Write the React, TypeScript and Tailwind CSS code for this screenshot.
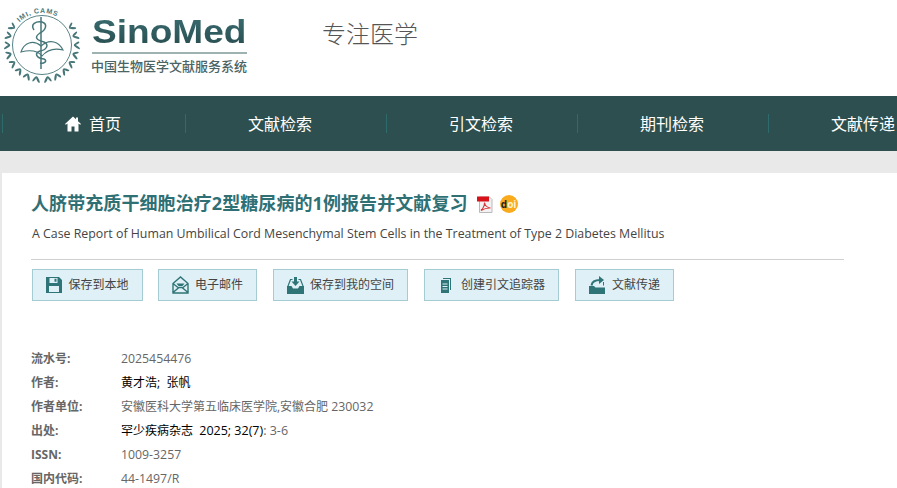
import React from "react";

const cjk = { fontFamily: '"Open Sans","Noto Sans CJK SC",sans-serif' };

function Logo() {
  const c = "#477679";
  const leaves: React.ReactNode[] = [];
  for (let s = -1; s <= 1; s += 2) {
    for (let a = 58; a <= 170; a += 16) {
      const ang = s * a;
      leaves.push(
        <g key={ang} transform={`rotate(${ang} 42 45)`}>
          <ellipse cx="42" cy="9.500" rx="1.100" ry="3.600" fill={c} transform={`rotate(${s * 34} 42 13)`} />
          <ellipse cx="42" cy="10" rx="1" ry="3.200" fill={c} transform={`rotate(${s * -30} 42 13)`} />
        </g>
      );
    }
  }
  return (
    <svg width="80" height="90" viewBox="0 0 80 90" className="shrink-0">
      <defs>
        <path id="arc" d="M17.500 24.400 A32 32 0 0 1 66.500 24.400" />
      </defs>
      {leaves}
      <circle cx="42" cy="45" r="29.500" fill="none" stroke={c} strokeWidth="0.900" />
      <path d="M21 52C24 43 33 39 41 46 50 38 59 42 63 50 55 48 47 50 42 56 37 50 29 50 21 52z" fill="#fff" stroke={c} strokeWidth="1.100" />
      <path d="M41 17v52" stroke={c} strokeWidth="1.500" />
      <path d="M34 30C30 24 36 21 42 22 48 24 46 30 40 33 34 37 36 40 44 42 50 45 46 50 40 51 34 53 36 58 44 59 48 61 44 64 40 63" fill="none" stroke={c} strokeWidth="1.500" />
      <text fontSize="7" fontWeight="700" fill={c} fontFamily="Liberation Sans, sans-serif" letterSpacing="0.700">
        <textPath href="#arc" startOffset="3">IMI, CAMS</textPath>
      </text>
    </svg>
  );
}

const Floppy = () => (
  <svg width="16" height="16" viewBox="0 0 16 16"><path fill="#2f7476" fillRule="evenodd" d="M0 0h13l3 3v13H0zM3.500 1v5h8V1zM8.500 1.800h2v3h-2zM3 9v6h10V9z" /></svg>
);
const Mail = () => (
  <svg width="17" height="18" viewBox="0 0 17 18"><path fill="none" stroke="#2f7476" strokeWidth="1.400" d="M1 7.500 8.500 1 16 7.500V17H1zM1 16.500l6-5h3l6 5M1 7.500l5 4M16 7.500l-5 4" /><path fill="#2f7476" d="M4.500 7.500h8l-2 2.500h-4z" /></svg>
);
const Inbox = () => (
  <svg width="17" height="17" viewBox="0 0 17 17"><path fill="#2f7476" d="M0 9h4.500l1.500 2.500h5L12.500 9H17v8H0z" /><path fill="none" stroke="#2f7476" strokeWidth="1.200" d="M1 9 3.500 2.500h2M16 9l-2.500-6.500h-2" /><path fill="#2f7476" d="M7 0h3v4.500h2.500l-4 4.500-4-4.500H7z" /></svg>
);
const Docs = () => (
  <svg width="10" height="15" viewBox="0 0 10 15"><path fill="#2f7476" d="M2 0h8v12H9V1H2z" /><path fill="#2f7476" fillRule="evenodd" d="M0 2h8v13H0zM1.500 5.500v1h5v-1zM1.500 8v1h5V8zM1.500 10.500v1h5v-1z" /></svg>
);
const FolderShare = () => (
  <svg width="17" height="18" viewBox="0 0 17 18"><path fill="#2f7476" d="M0 10h5l1.500 1.500H16V18H0z" /><path fill="none" stroke="#2f7476" strokeWidth="2" d="M2.500 9.500C3 6 6 4 11 4" /><path fill="#2f7476" d="M10 0l5 4-5 4z" /><path fill="none" stroke="#2f7476" strokeWidth="1" d="M14.500 6v3.500" /></svg>
);

function Btn({ w, icon, iconW, text, extra = "" }: { w: string; icon: React.ReactNode; iconW: string; text: string; extra?: string }) {
  return (
    <div className={`${w} ${extra} h-8 flex items-center justify-center bg-[#dff1f7] border border-[#a6ccd3] text-xs text-[#444]`}>
      <span className={`${iconW} flex justify-center mr-[6px]`}>{icon}</span>
      <span>{text}</span>
    </div>
  );
}

function Row({ k, children }: { k: string; children: React.ReactNode }) {
  return (
    <div className="flex h-6 items-center text-xs text-[#666]">
      <span className="w-[90px] font-bold">{k}</span>
      <span className="whitespace-nowrap">{children}</span>
    </div>
  );
}

function NavItem({ w, text, icon }: { w: string; text: string; icon?: React.ReactNode }) {
  return (
    <div className={`${w} shrink-0 h-full flex items-center`}>
      <span className="w-px h-[19px] bg-[#2f6a6c]" />
      <span className="flex items-center text-base text-white ml-[62px]">
        {icon}
        {text}
      </span>
    </div>
  );
}

export default function App() {
  return (
    <div className="w-[897px] h-[488px] overflow-hidden bg-[#e9e9e9]" style={cjk}>
      <header className="h-24 bg-white flex items-start">
        <Logo />
        <div className="ml-[12px] pt-[10px] w-[155px] flex flex-col">
          <div
            className="text-[34px] leading-[42px] font-bold origin-left scale-x-[1.09] bg-gradient-to-b from-[#3d7276] to-[#26494c] bg-clip-text text-transparent"
            style={{ fontFamily: '"Liberation Sans",sans-serif' }}
          >
            SinoMed
          </div>
          <div className="h-[2px] bg-[#9fb2b2]" />
          <div className="text-[13px] leading-[18px] font-medium text-[#4c6464] mt-[3px] -ml-px whitespace-nowrap">中国生物医学文献服务系统</div>
        </div>
        <div className="ml-[75px] mt-[16px] text-2xl leading-9 text-[#555] font-light">专注医学</div>
      </header>
      <nav className="h-[55px] bg-[#2d4f4f] flex pl-[2px] whitespace-nowrap">
        <NavItem
          w="w-[183px]"
          text="首页"
          icon={
            <svg width="16" height="16" viewBox="0 0 16 15" className="mr-[8px]">
              <path fill="#fff" d="M8 0 0 7.500l.8.800L2.500 7v8h4v-5h3v5h4V7l1.700 1.300.8-.8L13 4.700V1h-2v1.800z" />
            </svg>
          }
        />
        <NavItem w="w-[201px]" text="文献检索" />
        <NavItem w="w-[191px]" text="引文检索" />
        <NavItem w="w-[191px]" text="期刊检索" />
        <NavItem w="w-[191px]" text="文献传递" />
      </nav>
      <main className="mt-[22px] ml-[2px] h-[400px] bg-white pl-[29px] pt-[18px]">
        <div className="flex items-center h-6">
          <h1 className="text-lg leading-6 font-bold tracking-[0.08px] text-[#2f7074] whitespace-nowrap">人脐带充质干细胞治疗2型糖尿病的1例报告并文献复习</h1>
          <svg width="18" height="19" viewBox="0 0 18 18" className="ml-[8px] mt-[2px]">
            <path fill="#f2f2f2" stroke="#b9b9b9" d="M3.500 1.500h10l2.500 2.500v13H3.500z" />
            <path fill="#d8121b" d="M1 1h12v5H1z" />
            <path fill="none" stroke="#d8383c" strokeWidth="1.100" d="M5 15c2-2 3.500-5 3.500-8 .5 3 2.500 5 6 5.500-3-.3-6 .5-9.500 2.500z" />
          </svg>
          <span className="ml-[6px] mt-[2px] w-[18px] h-[18px] rounded-full bg-[#f9ab1d] flex items-center justify-center text-[10px] font-bold leading-none">
            <span className="text-[#222]">d</span>
            <span className="text-[#fff3d0]">oi</span>
          </span>
        </div>
        <div className="mt-[9px] ml-px text-[12.360px] leading-5 text-[#444] whitespace-nowrap">A Case Report of Human Umbilical Cord Mesenchymal Stem Cells in the Treatment of Type 2 Diabetes Mellitus</div>
        <div className="mt-[15px] w-[813px] h-px bg-[#cfcfcf]" />
        <div className="mt-[9px] flex ml-px gap-4 whitespace-nowrap">
          <Btn w="w-[111px]" icon={<Floppy />} iconW="w-4" text="保存到本地" />
          <Btn w="w-[99px]" extra="-ml-px" icon={<Mail />} iconW="w-[17px]" text="电子邮件" />
          <Btn w="w-[135px]" icon={<Inbox />} iconW="w-[17px]" text="保存到我的空间" />
          <Btn w="w-[135px]" icon={<Docs />} iconW="w-[17px]" text="创建引文追踪器" />
          <Btn w="w-[99px]" icon={<FolderShare />} iconW="w-[17px]" text="文献传递" />
        </div>
        <div className="mt-[46px]">
          <Row k="流水号:"><span className="text-[12.300px]">2025454476</span></Row>
          <Row k="作者:"><span className="text-black">黄才浩;&nbsp; 张帆</span></Row>
          <Row k="作者单位:">安徽医科大学第五临床医学院,安徽合肥 <span className="text-[12.300px]">230032</span></Row>
          <Row k="出处:"><span className="text-black">罕少疾病杂志&nbsp; <span className="text-[12.500px]">2025; 32(7)</span></span><span className="text-[12.500px]">: 3-6</span></Row>
          <Row k="ISSN:"><span className="text-[12.300px]">1009-3257</span></Row>
          <Row k="国内代码:"><span className="text-[12.300px]">44-1497/R</span></Row>
        </div>
      </main>
    </div>
  );
}
